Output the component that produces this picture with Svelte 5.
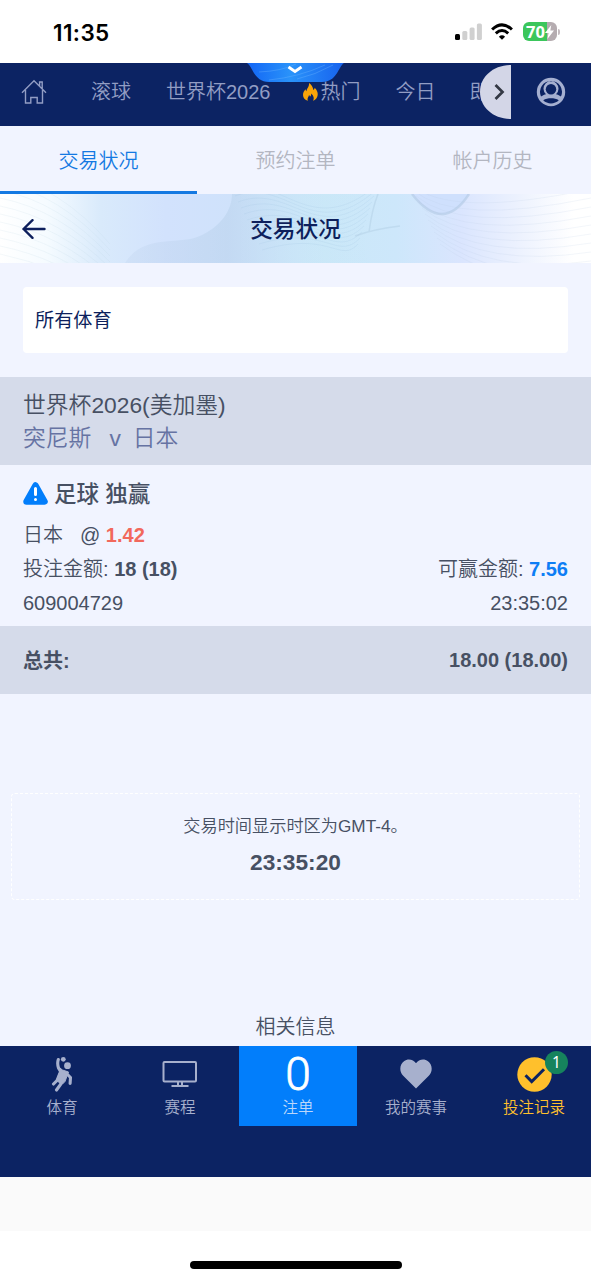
<script>
  const menu = [
    { label: "滚球", left: 91 },
    { label: "世界杯2026", left: 35 },
    { label: "热门", left: 31, hot: true },
    { label: "今日", left: 35 },
    { label: "即将", left: 34 },
  ];

  const tabs = ["交易状况", "预约注单", "帐户历史"];
  let activeTab = $state(0);

  const bet = {
    league: "世界杯2026(美加墨)",
    home: "突尼斯",
    away: "日本",
    market: "足球 独赢",
    pick: "日本",
    odds: "1.42",
    stake: "18 (18)",
    win: "7.56",
    id: "609004729",
    time: "23:35:02",
  };

  const bottom = [
    { icon: "sport", label: "体育" },
    { icon: "schedule", label: "赛程" },
    { icon: "slip", label: "注单" },
    { icon: "heart", label: "我的赛事" },
    { icon: "record", label: "投注记录" },
  ];

  // Contour lines of the title banner
  const lines = Array.from({ length: 11 }, (_, i) => i);
</script>

<div class="screen">
  <div class="status">
    <span class="clock">11:35</span>
    <svg class="signal" width="28" height="18" viewBox="0 0 28 18">
      <rect x="0" y="11" width="5" height="6" rx="1.5" fill="#000" />
      <rect x="7.3" y="8" width="5" height="9" rx="1.5" fill="#d0d0d0" />
      <rect x="14.6" y="4.5" width="5" height="12.5" rx="1.5" fill="#d0d0d0" />
      <rect x="21.9" y="0.5" width="5" height="16.5" rx="1.5" fill="#d0d0d0" />
    </svg>
    <svg class="wifi" width="22" height="18" viewBox="0 0 22 18" fill="none" stroke="#000" stroke-width="3">
      <path d="M1.1 6.5Q11-2.8 20.9 6.5" />
      <path d="M4.8 10.3Q11 4.6 17.2 10.3" />
      <path d="M11 16.8L7.9 13.7Q11 10.8 14.1 13.7Z" fill="#000" stroke="none" />
    </svg>
    <div class="battery">
      70<svg width="9" height="14" viewBox="0 0 9 14"><path d="M6.3 0L0 8h3.6L2.4 14 9 5.6H5.3z" fill="#fff" /></svg>
    </div>
    <i class="cap"></i>
  </div>

  <nav class="topnav">
    <svg class="home" width="26" height="26" viewBox="0 0 26 26" fill="none" stroke="#929dc4" stroke-width="1.4">
      <path d="M1 13.8L13 1.8l12 12M4.5 11v13h5.3v-5.5h6.4v5.5h5.3V11M18.6 7V3h2.6v6.5" />
    </svg>
    <div class="menu">
      {#each menu as item}
        <a href="#top" style="margin-left: {item.left}px">
          {#if item.hot}
            <svg width="17" height="20" viewBox="0 0 17 20">
              <path d="M7 1c2.2 1.5 4.2 4.2 4.3 7 .9-.5 1.3-1.3 1.3-2.3C14.800 7.700 16 10.400 15.700 13c-.3 3-2.300 5-4.700 5.800 1.500-2.300.8-5-1.800-7.300.1 1.500-.3 2.500-1.200 3.200-.1-.8-.4-1.300-1-1.700-.3 2-2.300 3.300-1 5.800C3 18 1 15.800 1 13c0-2.500 1.200-4.200 2.500-5.700.2 1 .5 1.600 1 2C4.700 6.500 7.500 4.500 7 1z" fill="#f9a408" />
            </svg>
          {/if}{item.label}
        </a>
      {/each}
    </div>
    <svg class="next" width="31" height="54" viewBox="0 0 31 54">
      <path d="M31 0C13 0 0 12 0 27s13 27 31 27z" fill="#d3d6e7" />
      <path d="M15.5 20l7 7-7 7" fill="none" stroke="#333844" stroke-width="2.7" />
    </svg>
    <svg class="user" width="30" height="30" viewBox="0 0 30 30">
      <circle cx="15" cy="15" r="14.2" fill="#a5afd0" />
      <path d="M5 19.500a11 11 0 1 1 20 0c-2-1.300-3.500-1.900-5-2.300a7.500 7.500 0 1 0-10 0c-1.500.4-3 1-5 2.300z" fill="#0c2363" />
      <circle cx="15" cy="12.3" r="5.2" fill="#0c2363" />
      <path d="M7.200 23.300c4.500-2.600 11.100-2.600 15.600 0-4.300 4.200-11.300 4.200-15.600 0z" fill="#0c2363" />
    </svg>
    <svg class="pull" width="97" height="20" viewBox="0 0 97 20">
      <defs>
        <linearGradient id="pull" x1="0" x2="1">
          <stop offset="0" stop-color="#1265f5" />
          <stop offset=".45" stop-color="#2a93fa" />
          <stop offset="1" stop-color="#1762ee" />
        </linearGradient>
      </defs>
      <path d="M0 0h97c-6 4-7 19-22 19H22C7 19 6 4 0 0z" fill="url(#pull)" />
      <path d="M12 9Q35 8 49 1M22 17Q52 14 78 2M50 16Q68 12 86 2" fill="none" stroke="#6fb8ff" stroke-width="1" opacity=".35" />
      <path d="M41.5 4l6.5 4.500 6.500-4.500" fill="none" stroke="#fff" stroke-width="2.8" />
    </svg>
  </nav>

  <div class="tabs">
    {#each tabs as tab, i}
      <button class:active={i === activeTab} onclick={() => (activeTab = i)}>{tab}</button>
    {/each}
  </div>

  <header class="title">
    <svg class="waves" width="591" height="69" viewBox="0 0 591 69" fill="none">
      <defs>
        <linearGradient id="fold" x1="125" x2="380" gradientUnits="userSpaceOnUse">
          <stop offset="0" stop-color="#bcd0ea" stop-opacity=".25" />
          <stop offset=".4" stop-color="#b4cee8" stop-opacity=".45" />
          <stop offset=".7" stop-color="#c3e4f5" stop-opacity=".2" />
          <stop offset="1" stop-color="#c3e4f5" stop-opacity="0" />
        </linearGradient>
      </defs>
      <path d="M125 69C145 38 178 53 202 41 221 32 232 16 232 0H380C365 30 360 55 370 69z" fill="url(#fold)" />
      <path d="M412 0Q443 40 469 0z" fill="#cfe0fd" />
      <path d="M412 0Q443 40 469 0" stroke="#b3c9e4" stroke-width="2.5" opacity=".6" />
      <path d="M355 42Q374 35 400 32M369 38Q372 15 378 0" stroke="#afcbe3" stroke-width="1.5" opacity=".45" />
      {#each lines as i}
        <path d="M{232 + i * 3} {i * 6 - 4}C{280 + i * 5} {i * 6 - 24} {310 + i * 3} {50 + i * 2} {378 - i * 2} {i * 6 - 10}" stroke="#9fc5df" opacity=".2" />
        <path d="M{410 + i * 3} {i * 6 - 10}Q{450 + i * 5} {25 + i * 7} 591 {i * 9 - 5}" stroke="#b9c9e4" opacity=".17" />
        <path d="M0 {i * 8 - 20}Q60 {i * 8 - 8} 110 {50 + i * 6}" stroke="#b6cfdf" opacity=".15" />
      {/each}
    </svg>
    <svg class="back" width="24" height="20" viewBox="0 0 24 20" fill="none" stroke="#0d1f5c" stroke-width="2.4" stroke-linecap="round" stroke-linejoin="round">
      <path d="M22.5 10H1.5M10.5 1.2L1.5 10l9 8.8" />
    </svg>
    <h1>交易状况</h1>
  </header>

  <main>
    <div class="select">所有体育</div>

    <section class="match">
      <div>{bet.league}</div>
      <div class="teams"><span>{bet.home}</span><span>v</span><span>{bet.away}</span></div>
    </section>

    <section class="bet">
      <h2>
        <svg width="25" height="23" viewBox="0 0 25 23">
          <path d="M12.5 3.5L21.5 19.5H3.5z" fill="#027efb" stroke="#027efb" stroke-width="6.5" stroke-linejoin="round" />
          <path d="M12.5 6.5v6M12.5 17.4v.2" stroke="#fff" stroke-width="3" stroke-linecap="round" />
        </svg>
        <span>{bet.market}</span>
      </h2>
      <div class="row"><span><span class="pick">{bet.pick}</span>@ <b class="odds">{bet.odds}</b></span></div>
      <div class="row">
        <span>投注金额: <b>{bet.stake}</b></span>
        <span>可赢金额: <b class="win">{bet.win}</b></span>
      </div>
      <div class="row"><span>{bet.id}</span><span>{bet.time}</span></div>
    </section>

    <section class="total"><b>总共:</b><b>18.00 (18.00)</b></section>

    <section class="notice">
      <p>交易时间显示时区为GMT-4。</p>
      <b>23:35:20</b>
    </section>

    <div class="related">相关信息</div>
  </main>

  <footer>
    {#each bottom as item}
      <a href="#top" class={item.icon}>
        <div class="icon">
          {#if item.icon === "sport"}
            <svg width="22" height="36" viewBox="0 0 22 36" fill="#a7b0cd">
              <circle cx="12.3" cy="3.3" r="2.4" />
              <circle cx="16.5" cy="9.7" r="3.4" />
              <path d="M7.300 3.500Q6 7.500 7.500 12L11 17M9 17L6 24.500 2.500 28M15.500 17.500l4 4-.4 6M11 24l-1.500 4.500-4 5.500" fill="none" stroke="#a7b0cd" stroke-width="3.1" stroke-linecap="round" stroke-linejoin="round" />
              <path d="M7.500 11l4 3 6 2-3.500 9.500-3 3-5.500-4 3-8z" stroke="#a7b0cd" stroke-linejoin="round" />
            </svg>
          {:else if item.icon === "schedule"}
            <svg width="36" height="28" viewBox="0 0 36 28" fill="none" stroke="#a7b0cd" stroke-width="2">
              <rect x="1.5" y="2" width="32.5" height="19.5" rx="1" />
              <path d="M16 22v4M20 22v4M9.5 26h17" />
            </svg>
          {:else if item.icon === "slip"}
            0
          {:else if item.icon === "heart"}
            <svg width="32" height="30" viewBox="0 0 32 30">
              <path d="M16 29.5L3.2 16.8C-1 12.5-.5 5.5 4 2.2 8-1 13.5.5 16 4.3 18.5.5 24-1 28 2.2c4.5 3.3 5 10.300.8 14.600z" fill="#a7b0cd" />
            </svg>
          {:else}
            <svg width="35" height="35" viewBox="0 0 35 35">
              <circle cx="17.5" cy="17.5" r="17.2" fill="#ffc02c" />
              <path d="M8.5 18.2l6.2 6.3L27 12.2" fill="none" stroke="#0c2363" stroke-width="3" />
            </svg>
            <span class="badge">1</span>
          {/if}
        </div>
        {item.label}
      </a>
    {/each}
  </footer>
  <div class="toolbar"></div>
  <div class="indicator"></div>
</div>

<style>
  :global(body) {
    margin: 0;
  }

  .screen {
    width: 591px;
    height: 1280px;
    overflow: hidden;
    background: #fff;
    color: #475063;
    font-family: "Liberation Sans", "Noto Sans CJK SC", sans-serif;
    font-size: 20px;
    font-weight: 350;
  }

  a {
    color: inherit;
    text-decoration: none;
  }

  b {
    font-weight: 700;
  }

  .status {
    display: flex;
    align-items: center;
    height: 63px;
  }

  .clock {
    width: 402px;
    margin: 2px 0 0 53px;
    font: 600 22.5px/26px Inter, sans-serif;
    letter-spacing: 0.4px;
    color: #000;
  }

  .wifi {
    margin-left: 8px;
  }

  .battery {
    display: flex;
    align-items: center;
    justify-content: center;
    width: 34px;
    height: 19px;
    margin-left: 10px;
    border-radius: 6px;
    background: linear-gradient(90deg, #3bc65c 70%, #b5acb0 70%);
    color: #fff;
    font: 700 16.5px/19px "Open Sans", sans-serif;
  }

  .cap {
    width: 2px;
    height: 6px;
    margin-left: 1px;
    border-radius: 0 2px 2px 0;
    background: #c5bcc0;
  }

  .topnav {
    position: relative;
    display: flex;
    align-items: center;
    height: 63px;
    background: #0c2363;
    color: #929dc4;
    box-sizing: border-box;
    padding: 0 25px 5px 21px;
  }

  .home {
    flex: none;
  }

  .menu {
    display: flex;
    flex: none;
    width: 511px;
    margin-left: -47px;
    overflow: hidden;
    white-space: nowrap;
    line-height: 30px;
  }

  .menu a {
    display: flex;
    align-items: center;
    flex: none;
  }

  .menu svg {
    margin-right: 2px;
  }

  /* Covers the end of the scrolling menu */
  .next {
    position: relative;
    flex: none;
    margin-left: -31px;
  }

  .user {
    flex: none;
    margin-left: 25px;
  }

  .pull {
    position: absolute;
    top: 0;
    left: 247px;
  }

  .tabs {
    display: flex;
    height: 68px;
    background: #f1f4ff;
  }

  .tabs button {
    flex: 1;
    padding: 2px 0 0;
    border: 0;
    border-bottom: 3px solid transparent;
    background: none;
    color: #b3b6c1;
    font: inherit;
  }

  .tabs .active {
    border-color: #1479e2;
    color: #1479e2;
  }

  .title {
    position: relative;
    display: flex;
    align-items: center;
    justify-content: center;
    height: 69px;
    background: linear-gradient(90deg, #fff 0, #f5fbff 8%, #d9eafb 17%, #d2e2fd 28%, #cfe2fb 40%, #cbe8f8 55%, #cde7fb 67%, #dae5fe 78%, #edf2fe 88%, #fff 97%);
  }

  .waves {
    position: absolute;
    inset: 0;
  }

  .back {
    position: absolute;
    left: 22px;
    top: 25px;
  }

  h1 {
    position: relative;
    margin: 0;
    color: #0d1f5c;
    font-size: 22.7px;
    line-height: 30px;
    font-weight: 500;
  }

  main {
    display: flex;
    flex-direction: column;
    height: 783px;
    background: #f1f4ff;
  }

  .select {
    height: 66px;
    margin: 24px 23px;
    padding-left: 12px;
    border-radius: 4px;
    background: #fff;
    color: #0d1f5c;
    font-size: 19.2px;
    line-height: 68px;
    font-weight: 400;
  }

  .match {
    height: 88px;
    box-sizing: border-box;
    padding: 12px 23px 0;
    background: #d5dbea;
    font-size: 22.8px;
    line-height: 33px;
  }

  .teams {
    display: flex;
    gap: 18px;
    color: #6673a3;
  }

  .teams span:last-child {
    margin-left: -6px;
  }

  .bet {
    height: 161px;
    box-sizing: border-box;
    padding: 10px 23px 0;
  }

  h2 {
    display: flex;
    align-items: center;
    gap: 6px;
    margin: 0;
    font-size: 22.5px;
    line-height: 36px;
    font-weight: 500;
  }

  h2 span {
    padding-top: 2px;
    line-height: 35px;
  }

  .row {
    display: flex;
    justify-content: space-between;
    margin-top: 6px;
    line-height: 34px;
  }

  .row + .row {
    margin-top: 0;
  }

  .pick {
    margin-right: 17px;
  }

  .odds {
    color: #f2685c;
  }

  .win {
    color: #0d7df5;
  }

  .total {
    display: flex;
    align-items: center;
    justify-content: space-between;
    height: 68px;
    padding: 0 23px;
    background: #d5dbea;
    line-height: 30px;
  }

  .total b:first-child {
    margin-top: 1px;
  }

  .notice {
    height: 107px;
    box-sizing: border-box;
    margin: 99px 11px 0;
    padding-top: 17px;
    border: 1.5px dashed #fff;
    border-radius: 4px;
    text-align: center;
    font-size: 22.7px;
    line-height: 34px;
  }

  .notice p {
    margin: 0 0 4px;
    font-size: 17.2px;
    line-height: 30px;
  }

  .related {
    margin-top: auto;
    padding-bottom: 4px;
    text-align: center;
    line-height: 30px;
  }

  footer {
    display: flex;
    height: 131px;
    padding-left: 3px;
    background: #0c2363;
    color: #a7b0cd;
    font-size: 15.5px;
    line-height: 22px;
  }

  footer a {
    flex: none;
    width: 118px;
    height: 80px;
    text-align: center;
  }

  .icon {
    position: relative;
    display: flex;
    align-items: center;
    justify-content: center;
    height: 51px;
    padding-top: 5px;
    box-sizing: border-box;
  }

  .slip {
    background: #027efb;
    color: #bcd7fa;
  }

  .slip .icon {
    color: #fff;
    font-family: Roboto, sans-serif;
    font-size: 46px;
    font-weight: 300;
    -webkit-text-stroke: 0.8px #fff;
  }

  .record {
    color: #ffc02c;
  }

  .badge {
    position: absolute;
    top: 5px;
    left: 70px;
    width: 23px;
    height: 23px;
    border-radius: 50%;
    background: #16835d;
    color: #fff;
    font-family: "Noto Sans", sans-serif;
    font-weight: 400;
    line-height: 23px;
  }

  .toolbar {
    height: 54px;
    background: #fafafa;
  }

  .indicator {
    width: 212px;
    height: 8px;
    margin: 30px auto 0;
    border-radius: 4px;
    background: #000;
  }
</style>
